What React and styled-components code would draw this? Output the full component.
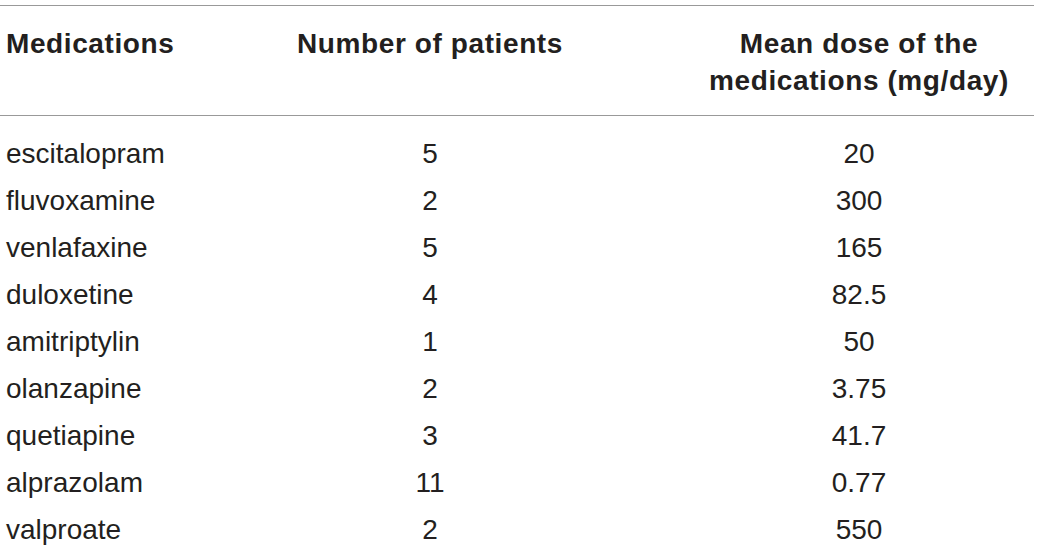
import React from "react";
import styled, { createGlobalStyle } from "styled-components";

const Global = createGlobalStyle`
  html, body { margin: 0; padding: 0; background: #fff; }
  body { font-family: "Liberation Sans", Arial, sans-serif; color: #231f20; }
`;

const Table = styled.div`
  width: 1034px;
  margin-top: 5px;
  border-top: 1px solid #999;
`;

const Grid = styled.div`
  display: grid;
  grid-template-columns: 176px 508px 350px;
`;

const Head = styled(Grid)`
  padding: 19px 0 16px;
  border-bottom: 1px solid #999;
`;

const Body = styled.div`
  padding-top: 14px;
`;

const Row = styled(Grid)`
  height: 47px;
`;

const HeadCell = styled.div`
  font-size: 28px;
  font-weight: 700;
  line-height: 37px;
  letter-spacing: 0.6px;
  color: #231f20;
  text-align: ${(p) => (p.$left ? "left" : "center")};
  padding-left: ${(p) => (p.$left ? "6px" : "0")};
`;

const Cell = styled.div`
  font-size: 28px;
  line-height: 47px;
  color: #231f20;
  white-space: nowrap;
  text-align: ${(p) => (p.$left ? "left" : "center")};
  padding-left: ${(p) => (p.$left ? "6px" : "0")};
`;

const rows = [
  ["escitalopram", "5", "20"],
  ["fluvoxamine", "2", "300"],
  ["venlafaxine", "5", "165"],
  ["duloxetine", "4", "82.5"],
  ["amitriptylin", "1", "50"],
  ["olanzapine", "2", "3.75"],
  ["quetiapine", "3", "41.7"],
  ["alprazolam", "11", "0.77"],
  ["valproate", "2", "550"],
];

export default function App() {
  return (
    <>
      <Global />
      <Table>
        <Head>
          <HeadCell $left>Medications</HeadCell>
          <HeadCell>Number of patients</HeadCell>
          <HeadCell>
            Mean dose of the
            <br />
            medications (mg/day)
          </HeadCell>
        </Head>
        <Body>
          {rows.map((r) => (
            <Row key={r[0]}>
              <Cell $left>{r[0]}</Cell>
              <Cell>{r[1]}</Cell>
              <Cell>{r[2]}</Cell>
            </Row>
          ))}
        </Body>
      </Table>
    </>
  );
}
